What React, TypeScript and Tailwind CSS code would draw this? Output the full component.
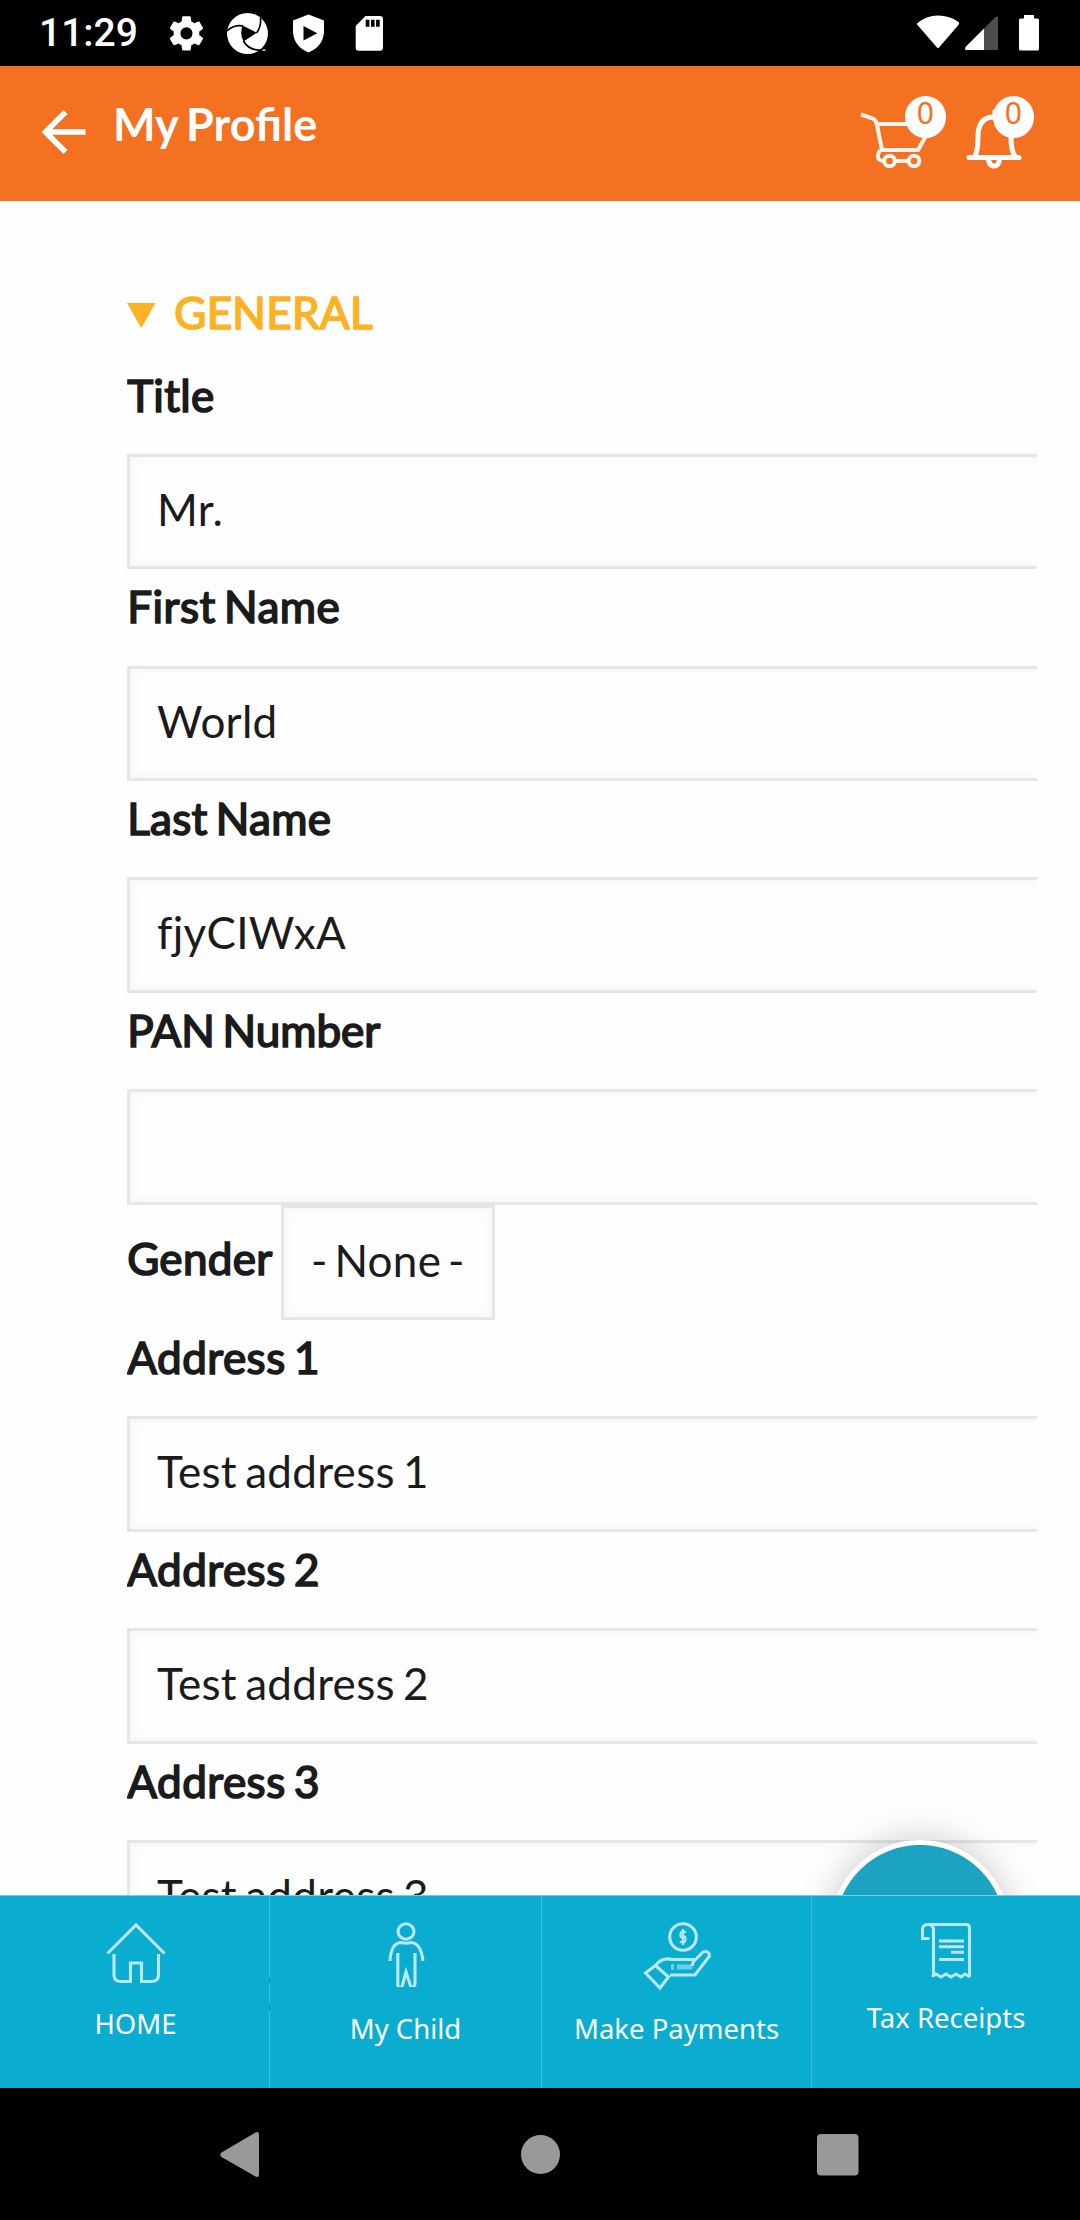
import type { ReactNode } from "react";

function StatusBar() {
  return (
    <div className="flex h-[66px] shrink-0 items-center justify-between bg-black pl-[39px]">
      <div className="flex items-center">
        <span className="w-[121px] font-['Roboto',sans-serif] text-[39px] leading-[66px] font-medium text-white">
          11:29
        </span>
        <svg width="230" height="66" viewBox="160 0 230 66" fill="#fff">
          <path
            transform="translate(165.1 12) scale(1.78)"
            d="M19.14 12.94c.04-.3.06-.61.06-.94 0-.32-.02-.64-.07-.94l2.03-1.58c.18-.14.23-.41.12-.61l-1.92-3.32c-.12-.22-.37-.29-.59-.22l-2.39.96c-.5-.38-1.03-.7-1.62-.94l-.36-2.54c-.04-.24-.24-.41-.48-.41h-3.84c-.24 0-.43.17-.47.41l-.36 2.54c-.59.24-1.13.57-1.62.94l-2.39-.96c-.22-.08-.47 0-.59.22L2.74 8.87c-.12.21-.08.47.12.61l2.03 1.58c-.05.3-.09.63-.09.94s.02.64.07.94l-2.03 1.58c-.18.14-.23.41-.12.61l1.92 3.32c.12.22.37.29.59.22l2.39-.96c.5.38 1.03.7 1.62.94l.36 2.54c.05.24.24.41.48.41h3.84c.24 0 .44-.17.47-.41l.36-2.54c.59-.24 1.13-.56 1.62-.94l2.39.96c.22.08.47 0 .59-.22l1.92-3.32c.12-.22.07-.47-.12-.61l-2.01-1.58zM12 15.4a3.4 3.4 0 1 1 0-6.8 3.4 3.4 0 0 1 0 6.8z"
          />
          <circle cx="247.500" cy="33.500" r="20.500" />
          <path d="M242.500 25.500L256.700 32.700L243.500 41.500Q239.500 34 242.500 25.500Z" fill="#000" />
          <path
            d="M227 31Q234 24.500 243 26M260.500 18Q261.500 26 256.500 33M262 50Q249 51 243.500 41"
            fill="none"
            stroke="#000"
            strokeWidth="1.700"
          />
          <rect x="262.500" y="49.500" width="3" height="1.300" />
          <path d="M308.500 14.500L324 20.500V32Q323 46.500 308.500 52.500Q294 46.500 293 32V20.500Z" />
          <path d="M303.500 26V40.500L317.300 33.300Z" fill="#000" />
          <path d="M365.500 16H380Q383 16 383 19V47.700Q383 50.700 380 50.700H358.700Q355.700 50.700 355.700 47.700V26Z" />
          <path d="M365.700 19.800h3.700v7h-3.700zM371 19.800h3.600v7H371zM376.100 19.800h3.600v7h-3.600z" fill="#000" />
        </svg>
      </div>
      <svg width="170" height="66" viewBox="910 0 170 66" fill="#fff">
        <path d="M917 23.500Q926 15.500 938 15.500T958.500 22Q960 23 958 25.500L939 47.500Q938 48.500 937 47.500L917.500 25Q916.500 24 917 23.500Z" />
        <path d="M984 28.500V50H966Q964 49 966 46.500Z" />
        <path d="M984 28.500L995 17.500Q998 15.500 998 18V48.500Q998 50 996.500 50H984Z" fill="#4d4d4d" />
        <path d="M1024 15H1034V18.500H1037.500Q1039 18.500 1039 20V49Q1039 50.500 1037.500 50.500H1020.500Q1019 50.500 1019 49V20Q1019 18.500 1020.500 18.500H1024Z" />
      </svg>
    </div>
  );
}

function Badge({ children }: { children: ReactNode }) {
  return (
    <span className="absolute top-[30px] right-0 flex h-[41.500px] w-[41.500px] justify-center rounded-full bg-white font-['Noto_Sans',sans-serif] text-[30px] leading-[34px] text-[#f47121]">
      {children}
    </span>
  );
}

function Header() {
  return (
    <header className="flex h-[134.500px] shrink-0 bg-[#f47121]">
      <svg width="113" height="134" viewBox="0 66 113 134" fill="none" stroke="#fff" strokeWidth="5.700">
        <path d="M85.500 132H46M65.500 112L45.500 132L65.500 152" />
      </svg>
      <h1 className="flex-1 font-['Lato',sans-serif] text-[45px] leading-[116px] font-bold text-white [word-spacing:-2.500px]">
        My Profile
      </h1>
      <div className="relative mr-[19px] w-[86px]">
        <svg width="86" height="134" viewBox="860 66 86 134" fill="none" stroke="#fff" strokeOpacity=".92" strokeWidth="4">
          <path d="M861 114.500L873 118.500Q876 120 877 125L882 150H918L926 136M877 124H912M880 150Q874 161 885 161H913" />
          <circle cx="889.500" cy="161" r="5.300" fill="#f47121" />
          <circle cx="914" cy="161" r="5.300" fill="#f47121" />
        </svg>
        <Badge>0</Badge>
      </div>
      <div className="relative mr-[46px] w-[69px]">
        <svg width="69" height="134" viewBox="965 66 69 134" fill="none" stroke="#fff" strokeWidth="5" strokeLinecap="round">
          <path d="M969 157.500H1019M975 156Q978 151 978 137Q978 117 994 117Q1011 117 1011 137Q1011 151 1015 156M988.500 159Q989 166 994 166T999.500 159" />
          <path d="M994.500 111V116" strokeWidth="4" />
        </svg>
        <Badge>0</Badge>
      </div>
    </header>
  );
}

function Label({ children, tracking = "tracking-[0.3px]" }: { children: ReactNode; tracking?: string }) {
  return (
    <span className={"pl-[0.700px] [-webkit-text-stroke:1.700px_currentColor] [word-spacing:-3.500px] " + tracking}>
      {children}
    </span>
  );
}

const boxClass =
  "h-[115.500px] border-[3px] border-[#e6e6e6] bg-[#fefefe] pl-[27.500px] leading-[104.500px] tracking-[0.3px] shadow-[inset_0_0_14px_rgba(0,0,0,0.045)]";

function Field({ label, value, tracking }: { label: string; value: string; tracking?: string }) {
  return (
    <div className="h-[211.750px] shrink-0">
      <div className="h-[96.250px] leading-[74px]">
        <Label tracking={tracking}>{label}</Label>
      </div>
      <div className={boxClass + " w-[960px] [word-spacing:-3.300px]"}>{value}</div>
    </div>
  );
}

function Content() {
  return (
    <main className="relative min-h-0 flex-1 overflow-hidden bg-[#fefefe] pl-[126.500px] font-['Lato',sans-serif] text-[44px] text-[#1b1b1c]">
      <div className="flex h-full w-[910.500px] flex-col overflow-hidden pt-[74.500px]">
        <div className="flex h-[82.500px] shrink-0 text-[#fdb124]">
          <svg width="47" height="76" viewBox="0 0 47 76" fill="#fdb124">
            <path d="M0 28H28.500L14.250 53Z" />
          </svg>
          <span className="leading-[74px]">
            <Label>GENERAL</Label>
          </span>
        </div>
        <Field label="Title" value="Mr." />
        <Field label="First Name" value="World" tracking="tracking-[0.5px]" />
        <Field label="Last Name" value="fjyCIWxA" />
        <Field label="PAN Number" value="" tracking="tracking-[0px]" />
        <div className="flex shrink-0">
          <div className="w-[154px] leading-[107.500px]">
            <Label>Gender</Label>
          </div>
          <div className={boxClass + " w-[214.500px] whitespace-nowrap [word-spacing:-4.800px]"}>- None -</div>
        </div>
        <Field label="Address 1" value="Test address 1" tracking="tracking-[0.5px]" />
        <Field label="Address 2" value="Test address 2" tracking="tracking-[0.5px]" />
        <Field label="Address 3" value="Test address 3" tracking="tracking-[0.5px]" />
      </div>
      <div className="absolute top-[1639.500px] left-[830px] h-[180px] w-[180px] rounded-full border-[5px] border-white bg-[#1ba3c1] shadow-[0_0_36px_rgba(0,0,0,0.22)]" />
    </main>
  );
}

function NavItem({ icon, label, width, pad }: { icon: ReactNode; label: string; width: string; pad: string }) {
  return (
    <div className={"flex flex-col items-center border-[#3cbedb] " + width}>
      {icon}
      <span className={"font-['Noto_Sans',sans-serif] text-[27.500px] leading-[38px] whitespace-nowrap text-white " + pad}>
        {label}
      </span>
    </div>
  );
}

const line = { fill: "none", stroke: "#fff", strokeOpacity: 0.72, strokeWidth: 3.1 };

function BottomNav() {
  return (
    <nav className="relative flex h-[193.500px] shrink-0 border-t border-[#70cfe4] bg-[#0aacd0]">
      <NavItem
        label="HOME"
        width="w-[270px] border-r pl-[2px]"
        pad="mt-[18px]"
        icon={
          <svg className="mt-[26px]" width="60" height="65" viewBox="106 1921 60 65" {...line}>
            <path d="M107.500 1952.500L136 1924L164.500 1952.500M114 1953V1974Q114 1980.500 121 1980.500H130.500V1962H141.500V1980.500H151Q158.500 1980.500 158.500 1974V1953" />
          </svg>
        }
      />
      <NavItem
        label="My Child"
        width="w-[272px] border-r"
        pad="mt-[23px]"
        icon={
          <svg className="mt-[26px]" width="40" height="65" viewBox="385 1921 40 65" {...line}>
            <ellipse cx="405" cy="1930.500" rx="8" ry="7.700" />
            <path d="M389 1960Q390 1942 400 1941.500Q405 1943 410 1941.500Q420 1942 422 1960M396.800 1952V1984Q397 1987 401 1986L405 1971L410 1986Q414 1987 414 1982V1952" />
          </svg>
        }
      />
      <NavItem
        label="Make Payments"
        width="w-[270px] border-r"
        pad="mt-[20px]"
        icon={
          <svg className="mt-[26px]" width="70" height="68" viewBox="641 1921 70 68" {...line}>
            <circle cx="682" cy="1936" r="13.300" />
            <path d="M685 1931.500Q680 1928.500 679.500 1933T682 1936T684.500 1939T679 1940.500M682 1928V1944" strokeWidth="2.200" />
            <path d="M654.500 1964.500L644.500 1972L659 1987L667.500 1976ZM654.500 1964.500Q661 1956 671 1958.500H692Q693 1960 691 1965M692 1961L702 1951Q708 1949 708.500 1955L694 1974H669" />
            <path d="M676 1966H691" strokeWidth="5" strokeOpacity=".4" />
            <path d="M671.500 1963V1969" strokeOpacity=".4" />
          </svg>
        }
      />
      <NavItem
        label="Tax Receipts"
        width="w-[268px]"
        pad="mt-[16px]"
        icon={
          <svg className="mt-[26px]" width="56" height="61" viewBox="918 1921 56 61" {...line}>
            <path d="M929.500 1937.500H922.500V1928Q923 1923.500 928 1923.500H966Q969.500 1923.500 969.500 1927V1976M928 1923.500Q933.500 1923.500 933.500 1929V1976M932 1975.500L936 1973L941 1976L946 1973L951 1976L956 1973L961 1976L965 1973L970 1976" />
            <path d="M939 1940H964M939 1945.700H964M951 1951.300H964M939 1958.500H964" />
          </svg>
        }
      />
      <span className="absolute top-[82px] left-[269px] h-[5px] w-px bg-[#08819c]" />
      <span className="absolute top-[109px] left-[269px] h-[5px] w-px bg-[#08819c]" />
    </nav>
  );
}

function SystemNav() {
  return (
    <footer className="h-[132px] shrink-0 bg-black">
      <svg width="1080" height="132" viewBox="0 2088 1080 132" fill="#999">
        <path d="M221.500 2152.500L255.500 2132.500Q259 2131 259 2135V2174Q259 2178 255.500 2176.500L221.500 2157Q219 2155 221.500 2152.500Z" />
        <circle cx="540.500" cy="2154.500" r="19.500" />
        <rect x="817" y="2134" width="41.500" height="41.500" rx="4" />
      </svg>
    </footer>
  );
}

export default function App() {
  return (
    <div className="flex h-[2220px] w-[1080px] flex-col overflow-hidden bg-white">
      <StatusBar />
      <Header />
      <Content />
      <BottomNav />
      <SystemNav />
    </div>
  );
}
